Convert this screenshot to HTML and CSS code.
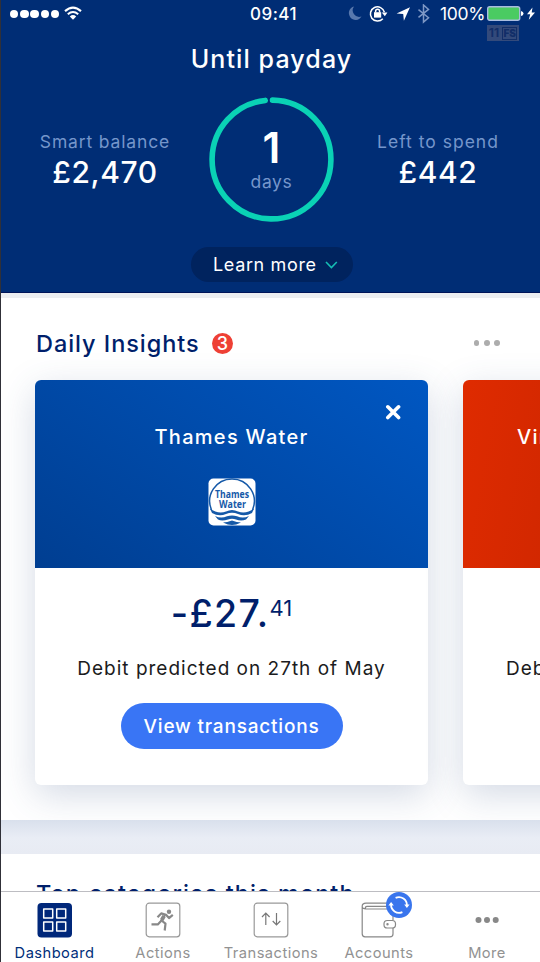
FILE: index.html
```html
<!DOCTYPE html>
<html lang="en">
<head>
<meta charset="utf-8">
<title>Dashboard</title>
<link rel="stylesheet" href="styles.css">
</head>
<body>
<div class="app">
  <header class="hero">
    <div class="status">
      <div class="signal"><i></i><i></i><i></i><i></i><i></i></div>
      <svg class="wifi" width="18" height="14" viewBox="0 0 18 14" fill="none" stroke="#fff" stroke-width="2.1"><path d="M1 5.1Q9-2 17 5.1M3.8 8.2Q9 3.8 14.2 8.2"/><path d="M5.8 10.4Q9 7.6 12.2 10.4L9 13.7Z" fill="#fff" stroke="none"/></svg>
      <span class="time">09:41</span>
      <svg class="icons" width="84" height="20" viewBox="0 0 84 20"><path d="M7 2.5A6.8 6.8 0 1 0 14.5 12.6A6.6 6.6 0 0 1 7 2.5Z" fill="#5878ad"/><g fill="none" stroke="#fff" stroke-width="1.5"><path d="M37.400 8.300A7.100 7.100 0 1 0 35.800 14.700"/><path d="M28.600 8.600V7.200a2 2 0 0 1 4 0v1.400"/></g><rect x="27" y="8.200" width="7.200" height="5.400" fill="#fff"/><path d="M34.800 8.400h5.600l-2.600 3.800Z" fill="#fff"/><path d="M63 3.2L49.6 9.4 56.2 9.9 56.9 16.7Z" fill="#fff"/><path d="M71.5 5.7l10 8-5 4.3V1l5 4.4-10 8" fill="none" stroke="#7e98c5" stroke-width="1.5"/></svg>
      <span class="pct">100%</span>
      <svg class="battery" width="50" height="18" viewBox="0 0 50 18"><rect x=".7" y="2.7" width="32" height="13.6" rx="2" fill="#4acb62" stroke="#a9bcdf" stroke-width="1.4"/><path d="M34 7q2.5.5 2.5 2.5T34 12Z" fill="#fff"/><path d="M45.5 3.5L40 10.3h3.2L41.8 15.8 48 8.6h-3.3Z" fill="#fff"/></svg>
      <div class="mark"><span>11</span><b>FS</b></div>
    </div>
    <h1>Until payday</h1>
    <div class="summary">
      <div class="stat left"><span class="label smart">Smart balance</span><strong>£2,470</strong></div>
      <div class="ring">
        <svg width="126" height="126" viewBox="0 0 126 126"><circle cx="62.5" cy="62.5" r="59.4" fill="none" stroke="#0ad2b5" stroke-width="5.6" stroke-linecap="round" stroke-dasharray="365.2 10" transform="rotate(-89 62.5 62.5)"/></svg>
        <div class="ring-text"><b>1</b><span class="label">days</span></div>
      </div>
      <div class="stat right"><span class="label spend">Left to spend</span><strong>£442</strong></div>
    </div>
    <div class="learn"><span>Learn more</span><svg width="13" height="8" viewBox="0 0 13 8"><path d="M1 1l5.4 5.5L11.8 1" fill="none" stroke="#15bdb4" stroke-width="1.6"/></svg></div>
  </header>
  <main class="feed">
    <section class="insights">
      <div class="heading"><h2>Daily Insights</h2><span class="count">3</span><span class="dots"><i></i><i></i><i></i></span></div>
      <div class="cards">
        <article class="card">
          <div class="cover thames">
            <svg class="close" width="16" height="16" viewBox="0 0 16 16"><path d="M2.8 2.8l10.8 10.8M13.6 2.8l-10.8 10.8" stroke="#fff" stroke-width="3.6" stroke-linecap="round"/></svg>
            <h3>Thames Water</h3>
            <svg class="logo" width="48" height="48" viewBox="0 0 48 48"><rect x=".5" y=".5" width="47" height="47" rx="5" fill="#fff"/><path d="M3.5 32A22.3 22.3 0 1 1 44.5 32" fill="none" stroke="#1559a8" stroke-width="1.5"/><path d="M2 30.5Q10 36.500 18 33.5 24 30.5 30 33.5 38 36.5 46 30.5L44 35Q37 39 30 36 24 33.5 18 36 11 39 4 35ZM7 38Q13 41 19 38.3 24 36.5 29 38.3 35 41 41 38L38 41.5Q33 43.5 28 41.4 24 40 20 41.4 14 43.5 10 41.5ZM15 44.5Q19 44.5 24 42.5 29 44.5 33 44.5 28 47 24 47T15 44.5Z" fill="#1559a8"/><text x="7" y="19.5" textLength="34" lengthAdjust="spacingAndGlyphs">Thames</text><text x="11" y="29.5" textLength="27" lengthAdjust="spacingAndGlyphs">Water</text></svg>
          </div>
          <div class="details">
            <div class="amount"><span>-£27.</span><sup>41</sup></div>
            <p>Debit predicted on 27th of May</p>
            <button>View transactions</button>
          </div>
        </article>
        <article class="card">
          <div class="cover virgin"><h3>Virgin Media</h3></div>
          <div class="details"><div class="amount"></div><p>Debit predicted on 1st of June</p></div>
        </article>
      </div>
    </section>
    <section class="categories"><h2>Top categories this month</h2></section>
  </main>
  <nav>
    <a class="active"><svg width="36" height="36" viewBox="0 0 36 36"><rect x=".5" y="1" width="34.5" height="34.5" rx="4" fill="#00277a"/><path d="M6.5 6.5h9v9h-9zM19.5 6.5h9v9h-9zM6.5 19.5h9v9h-9zM19.5 19.5h9v9h-9z" fill="none" stroke="#fff" stroke-width="1.5" stroke-linejoin="round" transform="translate(.2 .6)"/></svg><span>Dashboard</span></a>
    <a><svg width="36" height="36" viewBox="0 0 36 36"><rect x="1.2" y="1.2" width="33.6" height="33.6" rx="3" fill="#fff" stroke="#999" stroke-width="1.2"/><g fill="none" stroke="#888" stroke-width="2.2" stroke-linejoin="round"><circle cx="24" cy="9.8" r="2.2" fill="#888" stroke="none"/><path d="M12.5 15.2l3.7-3.8 4.8 1.4 3 3.3 3.8-3.2"/><path d="M20 13l-4.2 6.2-3 3.2H6.5"/><path d="M16.5 18.5l4 3.2-.8 6.8"/><path d="M19 14l-2.2 4" stroke-width="3.8"/></g></svg><span class="actions">Actions</span></a>
    <a><svg width="36" height="36" viewBox="0 0 36 36"><rect x="1.2" y="1.2" width="33.6" height="33.6" rx="3" fill="#fff" stroke="#999" stroke-width="1.2"/><path d="M12.8 23V11M9 15l3.8-4 3.8 4M23.5 11v12M19.7 19l3.8 4 3.8-4" fill="none" stroke="#777" stroke-width="1.2"/></svg><span class="transactions">Transactions</span></a>
    <a class="accounts"><svg width="36" height="36" viewBox="0 0 36 36" fill="none" stroke="#888" stroke-width="1.2"><path d="M32 18V9.5q0-2.5-2.5-2.5H5Q1.2 7 1.2 4.2T5 1.2h24.5M32 25.5v6.500q0 2.8-3 2.8H4q-2.8 0-2.8-3V4.5M31 4.3H6q-1.8 0-1.8 2.5"/><rect x="23" y="18.5" width="11.5" height="7.5" rx="3.3" fill="#fff"/><circle cx="26.5" cy="22.2" r=".6"/></svg><svg class="sync" width="26" height="26" viewBox="0 0 26 26"><circle cx="13" cy="13" r="13" fill="#3975ed"/><path d="M9.600 5.900a8 8 0 0 1 11.300 7.800M16.400 20.100a8 8 0 0 1-11.300-7.800" fill="none" stroke="#fff" stroke-width="1.8"/><path d="M18.200 12.5h5.400l-2.700 3.600ZM2.400 13.5h5.400L5.100 9.900Z" fill="#fff"/></svg><span class="acct">Accounts</span></a>
    <a><svg width="36" height="36" viewBox="0 0 36 36" fill="#888"><circle cx="9.5" cy="18" r="3"/><circle cx="18" cy="18" r="3"/><circle cx="26.7" cy="18" r="3"/></svg><span class="more">More</span></a>
  </nav>
</div>
</body>
</html>
```
FILE: styles.css
```css
* { box-sizing: border-box; }
body { margin: 0; font-family: Inter, "Liberation Sans", sans-serif; color: #001f6b; background: #fff; }
h1, h2, h3, p { margin: 0; font-weight: 500; white-space: nowrap; }
.app { position: relative; width: 540px; height: 962px; overflow: hidden; display: grid; grid-template-rows: 293px 598px 71px; }
.app::after { content: ""; position: absolute; left: 0; top: 0; width: 1px; height: 100%; background: #303038; z-index: 2; }
.hero { background: #002d75; border-bottom: 1px solid #001458; color: #fff; display: flex; flex-direction: column; align-items: center; }
.status { position: relative; align-self: stretch; height: 28px; display: flex; align-items: center; padding-left: 10px; flex-shrink: 0; }
.signal { display: flex; gap: 1.8px; width: 49px; }
.signal i { width: 8.4px; height: 8.4px; border-radius: 50%; background: #fff; flex-shrink: 0; }
.wifi { margin-left: 5px; margin-top: -2px; }
.time { margin-left: 168px; width: 49px; font-size: 17px; font-weight: 500; letter-spacing: .5px; white-space: nowrap; }
.icons { margin-left: 48px; }
.pct { margin-left: 9px; margin-top: -1px; width: 47px; font-size: 17.5px; letter-spacing: -.3px; }
.battery { margin-top: -2px; }
.mark { position: absolute; left: 487px; top: 25px; width: 32px; height: 16px; background: #334a7b; color: #122e68; display: flex; align-items: center; justify-content: center; gap: 3px; font-size: 12px; font-weight: 700; line-height: 12px; }
.mark b { border: 1px solid #122e68; width: 15px; height: 13px; text-align: center; font-size: 10px; line-height: 11px; }
h1 { margin-top: 15px; padding-left: 2px; font-size: 25px; line-height: 32px; letter-spacing: 1.1px; }
.summary { align-self: stretch; margin-top: 22px; height: 126px; display: grid; grid-template-columns: 209px 126px 205px; }
.stat { display: flex; flex-direction: column; align-items: center; padding: 34px 0 0 1px; }
.label { font-size: 17.5px; line-height: 22px; color: #7596cb; letter-spacing: .85px; white-space: nowrap; }
.ring .label { letter-spacing: .6px; }
.spend { letter-spacing: 1px; }
.stat strong { font-size: 30px; line-height: 38px; font-weight: 500; letter-spacing: .6px; }
.ring { display: grid; }
.ring > * { grid-area: 1 / 1; }
.ring-text { display: flex; flex-direction: column; align-items: center; padding: 28px 1px 0 0; }
.ring-text b { font-size: 42px; line-height: 46px; font-weight: 600; }
.learn { margin-top: 24px; width: 162px; height: 35px; margin-left: 3px; flex-shrink: 0; background: #00235e; border-radius: 18px; display: flex; align-items: center; padding-left: 22px; gap: 9px; font-size: 18px; letter-spacing: .65px; white-space: nowrap; }
.learn span { width: 103px; }
.feed { min-height: 0; overflow: hidden; background: linear-gradient(#d9e0ec 527px, #e9edf5 545px, #e8ebf3 561px); }
.insights { height: 527px; overflow: hidden; background: #fff; border-top: 5px solid #eceef1; }
.heading { display: flex; align-items: center; height: 40px; margin: 25px 39px 0 36px; }
h2 { font-size: 23.5px; letter-spacing: .95px; }
.heading h2 { width: 163px; }
.count { width: 21px; height: 21px; margin-left: 13px; border-radius: 50%; background: #ee4035; color: #fff; font-size: 18px; line-height: 21px; text-align: center; font-weight: 500; flex-shrink: 0; }
.dots { display: flex; gap: 4.5px; margin: 0 2px 0 auto; }
.dots i { width: 5.8px; height: 5.8px; border-radius: 50%; background: #adadad; }
.cards { display: flex; gap: 35px; padding: 17px 0 0 35px; }
.card { width: 393px; height: 405px; flex-shrink: 0; background: #fff; border-radius: 6px; box-shadow: 0 10px 36px rgba(60, 85, 135, .22); }
.cover { position: relative; height: 188px; border-radius: 6px 6px 0 0; color: #fff; display: flex; flex-direction: column; align-items: center; padding-top: 45px; }
.thames { background: linear-gradient(35deg, #003e91, #0057c2); }
.virgin { background: linear-gradient(100deg, #df2b00, #c92500 45%, #b91e00); align-items: flex-start; padding-left: 54px; }
h3 { font-size: 20px; line-height: 25px; letter-spacing: 1.3px; }
.close { position: absolute; right: 27px; top: 24px; }
.logo { margin-top: 28px; }
.logo text { font: 700 10.5px "Open Sans", sans-serif; fill: #1559a8; }
.details { display: flex; flex-direction: column; align-items: center; color: #1b1b20; }
.amount { height: 62px; margin-top: 22px; display: flex; align-items: flex-start; color: #001f6b; }
.amount span { font-size: 37.5px; line-height: 48px; font-weight: 500; letter-spacing: 1.4px; }
.amount sup { font-size: 22px; line-height: 28px; padding-top: 4px; vertical-align: baseline; letter-spacing: 0; }
.details p { font-size: 19px; font-weight: 400; line-height: 34px; letter-spacing: 1px; }
.virgin + .details { align-items: flex-start; padding-left: 43px; }
button { margin: 17px 0 0; width: 222px; height: 46px; border: 0; border-radius: 23px; background: #3975f5; color: #fff; font: 500 19px Inter, sans-serif; letter-spacing: .8px; padding: 0; }
.categories { margin-top: 34px; height: 80px; background: #fff; padding: 25px 0 0 36px; }
.categories h2 { letter-spacing: 1.05px; }
nav { z-index: 1; background: #fff; border-top: 1px solid #bdbdc2; display: grid; grid-template-columns: repeat(5, 108px); padding: 10px 0 0 1px; }
nav a { position: relative; display: flex; flex-direction: column; align-items: center; color: #929292; font-size: 14.7px; letter-spacing: .45px; }
nav a svg { flex-shrink: 0; }
nav a span { margin-top: 6px; line-height: 18px; white-space: nowrap; }
nav .active { color: #002e79; left: -.5px; }
.sync { position: absolute; left: 61px; top: -10px; }
```
